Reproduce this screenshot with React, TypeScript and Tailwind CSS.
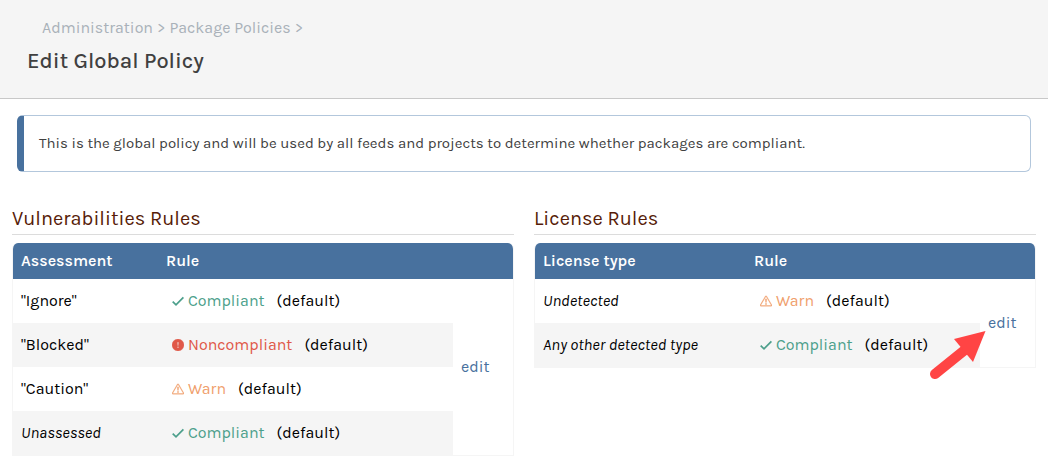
import type { ReactNode } from "react";
import { BsExclamationCircleFill, BsExclamationTriangle } from "react-icons/bs";

type Status = "Compliant" | "Noncompliant" | "Warn";

interface Rule {
  name: string;
  italic?: boolean;
  status: Status;
}

const vulnerabilityRules: Rule[] = [
  { name: '"Ignore"', status: "Compliant" },
  { name: '"Blocked"', status: "Noncompliant" },
  { name: '"Caution"', status: "Warn" },
  { name: "Unassessed", italic: true, status: "Compliant" },
];

const licenseRules: Rule[] = [
  { name: "Undetected", italic: true, status: "Warn" },
  { name: "Any other detected type", italic: true, status: "Compliant" },
];

const statusColors: Record<Status, string> = {
  Compliant: "text-[#4c9f8b]",
  Noncompliant: "text-[#e05848]",
  Warn: "text-[#f0a06c]",
};

function CheckIcon() {
  return (
    <svg className="size-3" viewBox="0 0 12 12" fill="none" aria-hidden>
      <path d="M0.7 6.6 4 9.9 11.4 2.4" stroke="currentColor" strokeWidth="1.7" />
    </svg>
  );
}

const statusIcons: Record<Status, ReactNode> = {
  Compliant: <CheckIcon />,
  Noncompliant: <BsExclamationCircleFill className="size-3" strokeWidth="0.4" aria-hidden />,
  Warn: <BsExclamationTriangle className="size-3" strokeWidth="0.4" aria-hidden />,
};

interface RulesProps {
  title: string;
  nameHeading: string;
  rules: Rule[];
  nameColumn: string;
  editColumn: string;
  children?: ReactNode;
}

function RulesSection({ title, nameHeading, rules, nameColumn, editColumn, children }: RulesProps) {
  return (
    <section>
      <h2 className="border-b border-[#dcdcdc] text-xl leading-[30px] text-[#571c08]">{title}</h2>
      <div className="relative mt-2">
        <div className="overflow-hidden rounded-t-md border border-t-0 border-[#f5f5f5]">
          <table className="w-full table-fixed text-left text-base leading-5">
            <colgroup>
              <col className={nameColumn} />
              <col />
              <col className={editColumn} />
            </colgroup>
            <thead className="bg-[#48719e] text-white">
              <tr>
                <th className="p-2 font-semibold">{nameHeading}</th>
                <th className="p-2 font-semibold" colSpan={2}>Rule</th>
              </tr>
            </thead>
            <tbody>
              {rules.map((rule, index) => (
                <tr key={rule.name}>
                  <td className={`px-2 py-3 ${index % 2 ? "bg-[#f5f5f5]" : ""} ${rule.italic ? "italic" : ""}`}>
                    {rule.name}
                  </td>
                  <td className={`py-3 pr-2 pl-3.5 ${index % 2 ? "bg-[#f5f5f5]" : ""}`}>
                    <span className="flex items-center gap-3">
                      <span className={`flex items-center gap-1 ${statusColors[rule.status]}`}>
                        {statusIcons[rule.status]}
                        {rule.status}
                      </span>
                      (default)
                    </span>
                  </td>
                  {index === 0 && (
                    <td className="px-2 align-middle" rowSpan={rules.length}>
                      <a href="#edit" className="text-[#48719e]">edit</a>
                    </td>
                  )}
                </tr>
              ))}
            </tbody>
          </table>
        </div>
        {children}
      </div>
    </section>
  );
}

function PointerArrow() {
  return (
    <svg
      className="pointer-events-none absolute top-[87px] right-12"
      width="60"
      height="50"
      viewBox="0 0 60 50"
      aria-hidden
    >
      <path d="M7 44 38 19" stroke="#ff4444" strokeWidth="10" strokeLinecap="round" />
      <path d="M57.5 1 26 9 45 32Z" fill="#ff4444" />
    </svg>
  );
}

export default function App() {
  return (
    <div className="bg-white font-['Karla','Inter',sans-serif] text-black">
      <header className="border-b border-[#c8c8c8] bg-[#f5f5f5] px-[27px] pt-4 pb-[22px]">
        <nav className="flex gap-1 px-[15px] text-base leading-6 text-[#a9b1b9]" aria-label="Breadcrumb">
          <a href="#administration">Administration</a>
          <span>&gt;</span>
          <a href="#policies">Package Policies</a>
          <span>&gt;</span>
        </nav>
        <h1 className="mt-1.5 text-[22px] leading-[30px] font-medium text-[#404040]">Edit Global Policy</h1>
      </header>
      <main>
        <p className="mx-[17px] mt-4 rounded-md border border-l-[7px] border-[#b3c7dc] border-l-[#48719e] px-[15px] pt-[15px] pb-4 text-[15px] leading-6 text-[#404040]">
          This is the global policy and will be used by all feeds and projects to determine whether packages are compliant.
        </p>
        <div className="grid grid-cols-2 items-start gap-5 px-3 pt-8 pb-3">
          <RulesSection
            title="Vulnerabilities Rules"
            nameHeading="Assessment"
            rules={vulnerabilityRules}
            nameColumn="w-[145px]"
            editColumn="w-[60px]"
          />
          <RulesSection
            title="License Rules"
            nameHeading="License type"
            rules={licenseRules}
            nameColumn="w-[211px]"
            editColumn="w-[55px]"
          >
            <PointerArrow />
          </RulesSection>
        </div>
      </main>
    </div>
  );
}
